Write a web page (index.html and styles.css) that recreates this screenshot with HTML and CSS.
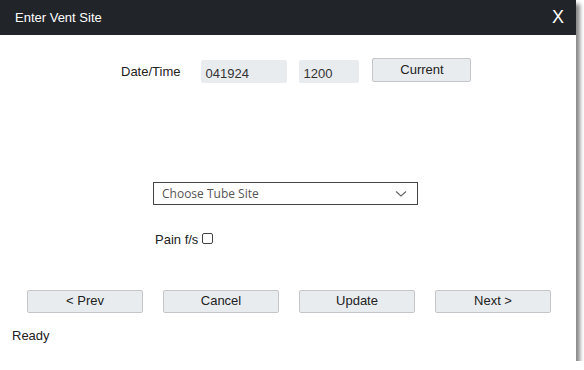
FILE: index.html
```html
<!DOCTYPE html>
<html lang="en">
<head>
  <meta charset="UTF-8">
  <title>Enter Vent Site</title>
  <link rel="stylesheet" href="styles.css">
</head>
<body>
  <div class="dialog">
    <div class="header">
      <span class="title">Enter Vent Site</span>
      <span class="close">X</span>
    </div>
    <div class="content">
      <div class="datetime">
        <label class="label">Date/Time</label>
        <input type="text" class="field date" value="041924">
        <input type="text" class="field time" value="1200">
        <button class="btn current">Current</button>
      </div>
      <div class="site">
        <div class="select">
          <span>Choose Tube Site</span>
          <svg width="12" height="8" viewBox="0 0 12 8"><path d="M1 1.5 L6 6 L11 1.5" fill="none" stroke="#666" stroke-width="1.1"/></svg>
        </div>
      </div>
      <div class="pain">
        <span>Pain f/s</span>
        <span class="check"></span>
      </div>
      <div class="actions">
        <button class="btn nav">&lt; Prev</button>
        <button class="btn nav">Cancel</button>
        <button class="btn nav">Update</button>
        <button class="btn nav">Next &gt;</button>
      </div>
      <div class="status">Ready</div>
    </div>
  </div>
</body>
</html>
```

FILE: styles.css
```css
body {
  margin: 0;
  background: #fff;
  font-family: "Liberation Sans", Arial, sans-serif;
  font-size: 13px;
  color: #222;
}

.dialog {
  width: 576px;
  height: 361px;
  background: #fff;
  box-shadow: 4px 4px 4px #8a8a8a;
  display: flex;
  flex-direction: column;
}

.header {
  height: 35px;
  background: #212529;
  color: #fff;
  display: flex;
  align-items: center;
  justify-content: space-between;
  padding: 0 12px 0 15px;
}

.title {
  font-size: 13px;
}

.close {
  font-size: 18px;
}

.content {
  flex: 1;
  display: flex;
  flex-direction: column;
}

.datetime {
  display: flex;
  align-items: flex-start;
  margin-top: 23px;
  padding-left: 121px;
}

.label {
  margin-top: 6px;
  margin-right: 21px;
}

.field {
  height: 23px;
  box-sizing: border-box;
  margin-top: 2px;
  border: none;
  border-radius: 2px;
  background: #e9ecef;
  font-family: "Liberation Sans", Arial, sans-serif;
  font-size: 13px;
  color: #333;
  padding: 3px 0 0 4px;
}

.date {
  width: 86px;
}

.time {
  width: 60px;
  margin-left: 12px;
}

.btn {
  box-sizing: border-box;
  background: #e9ecef;
  border: 1px solid #c4c6c9;
  border-radius: 2px;
  font-family: "Liberation Sans", Arial, sans-serif;
  font-size: 13px;
  color: #222;
  padding: 0;
}

.current {
  width: 99px;
  height: 24px;
  margin-left: 13px;
  padding-bottom: 2px;
}

.site {
  margin-top: 99px;
  padding-left: 153px;
}

.select {
  width: 265px;
  height: 23px;
  box-sizing: border-box;
  border: 1px solid #444;
  display: flex;
  align-items: center;
  justify-content: space-between;
  padding: 0 10px 0 8px;
  font-family: "Open Sans", sans-serif;
  font-size: 12px;
  color: #555;
}

.pain {
  display: flex;
  align-items: center;
  margin-top: 27px;
  padding-left: 155px;
}

.check {
  width: 9px;
  height: 9px;
  border: 1px solid #444;
  border-radius: 2px;
  margin-left: 4px;
  margin-top: -2px;
}

.actions {
  display: flex;
  gap: 20px;
  margin-top: 43px;
  padding-left: 27px;
}

.nav {
  width: 116px;
  height: 23px;
  padding-bottom: 2px;
}

.status {
  margin-top: 15px;
  padding-left: 12px;
}
```
